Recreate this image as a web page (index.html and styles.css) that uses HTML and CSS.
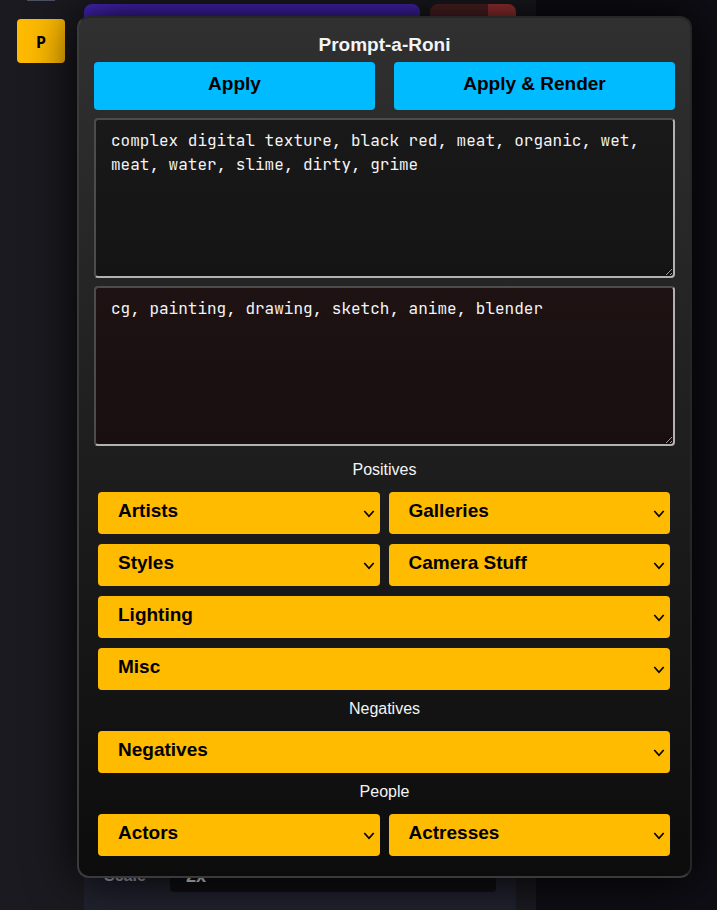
FILE: index.html
```html
<!DOCTYPE html>
<html lang="en">
<head>
<meta charset="utf-8">
<title>Prompt-a-Roni</title>
<link rel="stylesheet" href="styles.css">
</head>
<body>
<div class="app">
  <nav class="rail"><span class="rail-handle"></span><button class="launcher" type="button">P</button></nav>
  <main class="settings">
    <div class="bar">
      <div class="generate"></div>
      <div class="stop"></div>
    </div>
    <div class="panel">
      <label class="panel-label" for="scale">Scale</label>
      <select class="panel-select" id="scale"><option>2x</option></select>
    </div>
  </main>
</div>
<section class="dialog" role="dialog" aria-labelledby="title">
  <h1 class="title" id="title">Prompt-a-Roni</h1>
  <div class="actions">
    <button class="action" type="button">Apply</button>
    <button class="action" type="button">Apply &amp; Render</button>
  </div>
  <textarea class="prompt" aria-label="Prompt" spellcheck="false">complex digital texture, black red, meat, organic, wet, meat, water, slime, dirty, grime</textarea>
  <textarea class="prompt prompt-negative" aria-label="Negative prompt" spellcheck="false">cg, painting, drawing, sketch, anime, blender</textarea>
  <h2 class="heading heading-first">Positives</h2>
  <div class="group">
    <select class="pick" aria-label="Artists"><option>Artists</option></select>
    <select class="pick" aria-label="Galleries"><option>Galleries</option></select>
    <select class="pick" aria-label="Styles"><option>Styles</option></select>
    <select class="pick" aria-label="Camera Stuff"><option>Camera Stuff</option></select>
    <select class="pick wide" aria-label="Lighting"><option>Lighting</option></select>
    <select class="pick wide" aria-label="Misc"><option>Misc</option></select>
  </div>
  <h2 class="heading">Negatives</h2>
  <div class="group">
    <select class="pick wide" aria-label="Negatives"><option>Negatives</option></select>
  </div>
  <h2 class="heading">People</h2>
  <div class="group">
    <select class="pick" aria-label="Actors"><option>Actors</option></select>
    <select class="pick" aria-label="Actresses"><option>Actresses</option></select>
  </div>
</section>
</body>
</html>
```
FILE: styles.css
```css
* { box-sizing: border-box; }

body {
  margin: 0;
  position: relative;
  overflow: hidden;
  background: #0f0e15;
  color: #f3f4f6;
  font: 16px/24px "Liberation Sans", Arial, sans-serif;
}

.app {
  display: flex;
  width: calc(75% - 2px);
  min-height: 100vh;
  padding-right: 20px;
  background: #1b1a20;
}

.rail {
  width: 84px;
  padding: 0 16px;
}

.rail-handle {
  display: block;
  width: 28px;
  height: 1px;
  margin: 0 auto 18px 11px;
  background: #4b5063;
}

.launcher {
  display: block;
  width: 48px;
  height: 44px;
  margin-left: 1px;
  padding: 2px 0 0;
  border: 0;
  border-radius: 4px;
  background: #ffbb00;
  color: #000;
  font: bold 16px/24px "Noto Sans", sans-serif;
}

.settings {
  flex: 1;
  display: flex;
  flex-direction: column;
  justify-content: space-between;
  padding-top: 4px;
}

.bar {
  display: flex;
  gap: 10px;
}

.generate {
  flex: 1;
  height: 40px;
  border-radius: 8px;
  background: linear-gradient(#4a27c4, #32158a);
}

.stop {
  width: 86px;
  height: 40px;
  border-radius: 8px;
  background: linear-gradient(90deg, #542426 58px, #a83535 58px);
}

.panel {
  display: flex;
  align-items: center;
  padding: 10px 20px 18px;
  background: #20222e;
}

.panel-label {
  width: 66px;
  padding-top: 4px;
  color: #b4b7ca;
  font-weight: bold;
}

.panel-select {
  flex: 1;
  height: 36px;
  padding: 4px 12px 0;
  border: 0;
  border-radius: 4px;
  background: #101014;
  color: #eee;
  font: bold 18px/24px "Liberation Sans", Arial, sans-serif;
}

.dialog {
  position: absolute;
  top: 16px;
  left: 77px;
  right: 25px;
  padding: 15px 15px 20px;
  border: 2px solid;
  border-color: #262626 #262626 #3a3a3a #3a3a3a;
  border-radius: 12px;
  background: linear-gradient(#303030, #0c0c0c);
  box-shadow: 0 0 50px #000;
}

.title {
  margin: 0;
  padding-bottom: 5px;
  font-size: 19px;
  line-height: 24px;
  text-align: center;
}

.actions {
  display: grid;
  grid-template-columns: 1fr 1fr;
  gap: 19px;
  margin-bottom: 8px;
}

.action {
  height: 48px;
  padding: 0 0 4px;
  border: 0;
  border-radius: 4px;
  background: #00bbff;
  color: #000;
  font: bold 19px/24px "Liberation Sans", Arial, sans-serif;
}

.prompt {
  display: block;
  width: 100%;
  height: 160px;
  margin-bottom: 8px;
  padding: 9px 15px;
  border: 2px solid;
  border-color: #4c4c4c #b2b2b2 #b2b2b2 #4c4c4c;
  border-radius: 4px;
  background: linear-gradient(#191919, #141414);
  color: #f3f4f6;
  font: 16px/24px "JetBrains Mono", "DejaVu Sans Mono", monospace;
}

.prompt-negative {
  margin-bottom: 0;
  background: linear-gradient(#1e1213, #190f10);
}

.heading {
  margin: 0;
  padding: 7px 0 10px;
  font-size: 16px;
  font-weight: normal;
  line-height: 24px;
  text-align: center;
}

.heading-first {
  padding: 12px 0 10px;
}

.group {
  display: grid;
  grid-template-columns: 1fr 1fr;
  gap: 10px 9px;
  margin: 0 5px 0 4px;
}

.pick {
  appearance: none;
  width: 100%;
  min-width: 0;
  height: 42px;
  padding: 4px 20px 8px;
  border: 0;
  border-radius: 4px;
  background: #ffbb00 url("data:image/svg+xml,%3Csvg xmlns='http://www.w3.org/2000/svg' width='12' height='8' viewBox='0 0 12 8'%3E%3Cpath d='M1.300 1 6 6.200 10.700 1' fill='none' stroke='%23000' stroke-width='1.700'/%3E%3C/svg%3E") no-repeat right 5px top 18px;
  color: #000;
  font: bold 19px/24px "Liberation Sans", Arial, sans-serif;
}

.wide { grid-column: 1 / -1; }
```
